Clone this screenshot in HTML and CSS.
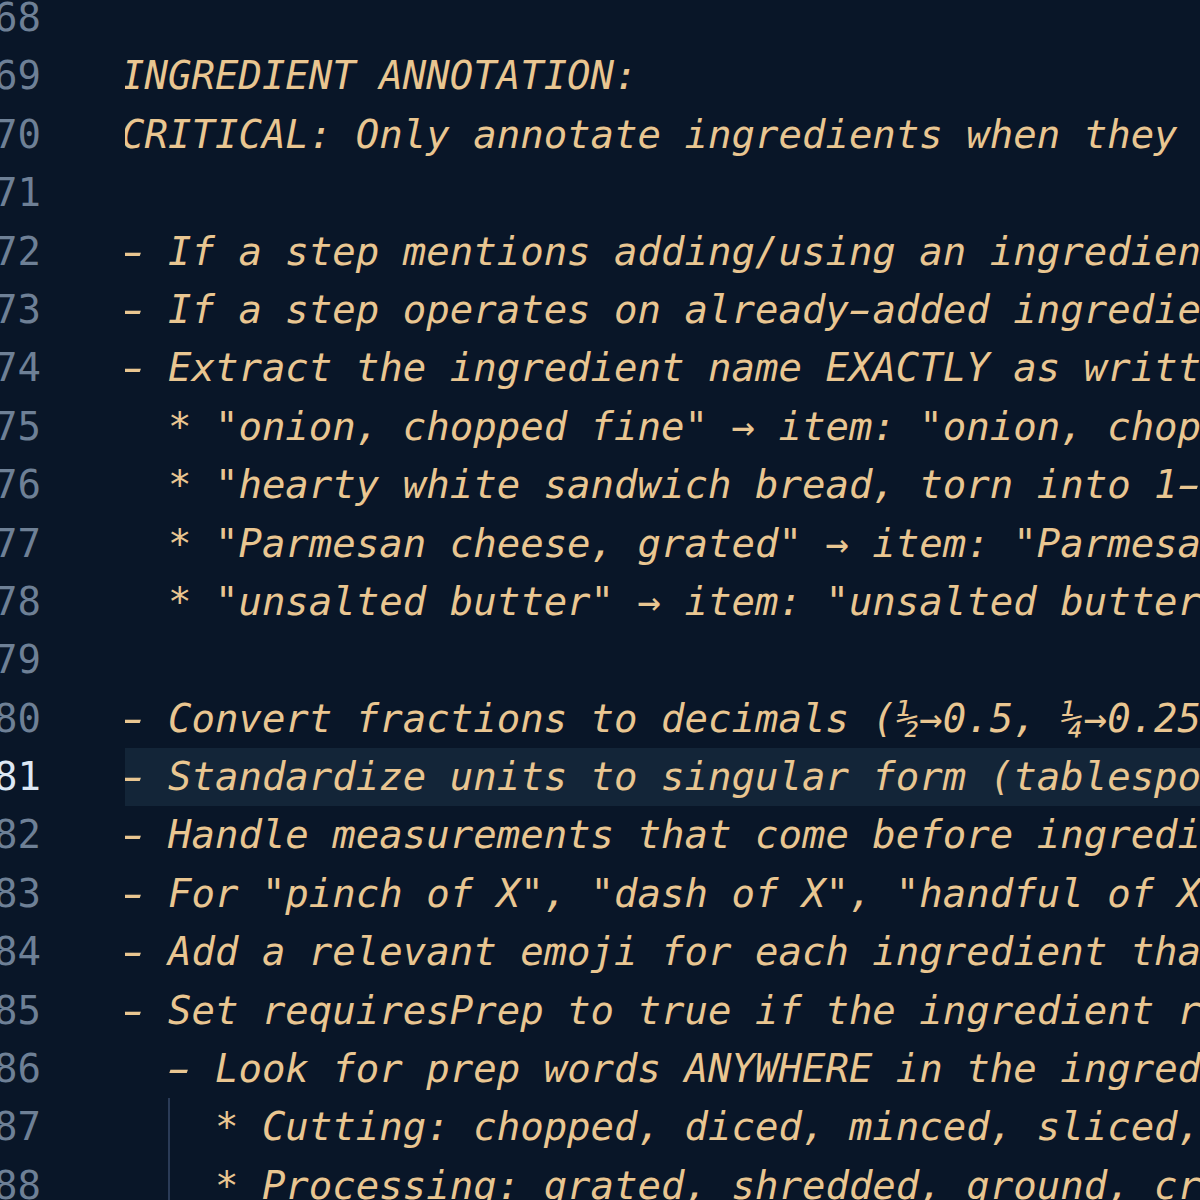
FILE: index.html
```html
<!DOCTYPE html>
<html>
<head>
<meta charset="utf-8">
<link rel="stylesheet" href="styles.css">
</head>
<body>
<div class="editor">
  <div class="row"><span class="ln">68</span><div class="code"><span class="txt"></span></div></div>
  <div class="row"><span class="ln">69</span><div class="code"><span class="txt">INGREDIENT ANNOTATION:</span></div></div>
  <div class="row"><span class="ln">70</span><div class="code"><span class="txt">CRITICAL: Only annotate ingredients when they are explicitly added</span></div></div>
  <div class="row"><span class="ln">71</span><div class="code"><span class="txt"></span></div></div>
  <div class="row"><span class="ln">72</span><div class="code"><span class="txt"><span class="h">-</span> If a step mentions adding/using an ingredient, annotate it</span></div></div>
  <div class="row"><span class="ln">73</span><div class="code"><span class="txt"><span class="h">-</span> If a step operates on already<span class="h">-</span>added ingredients, skip it</span></div></div>
  <div class="row"><span class="ln">74</span><div class="code"><span class="txt"><span class="h">-</span> Extract the ingredient name EXACTLY as written</span></div></div>
  <div class="row"><span class="ln">75</span><div class="code"><span class="txt">  * "onion, chopped fine" → item: "onion, chopped fine"</span></div></div>
  <div class="row"><span class="ln">76</span><div class="code"><span class="txt">  * "hearty white sandwich bread, torn into 1<span class="h">-</span>inch pieces"</span></div></div>
  <div class="row"><span class="ln">77</span><div class="code"><span class="txt">  * "Parmesan cheese, grated" → item: "Parmesan cheese, grated"</span></div></div>
  <div class="row"><span class="ln">78</span><div class="code"><span class="txt">  * "unsalted butter" → item: "unsalted butter"</span></div></div>
  <div class="row"><span class="ln">79</span><div class="code"><span class="txt"></span></div></div>
  <div class="row"><span class="ln">80</span><div class="code"><span class="txt"><span class="h">-</span> Convert fractions to decimals (½→0.5, ¼→0.25, ¾→0.75)</span></div></div>
  <div class="row active"><span class="ln">81</span><div class="code"><span class="txt"><span class="h">-</span> Standardize units to singular form (tablespoon, cup)</span></div></div>
  <div class="row"><span class="ln">82</span><div class="code"><span class="txt"><span class="h">-</span> Handle measurements that come before ingredients</span></div></div>
  <div class="row"><span class="ln">83</span><div class="code"><span class="txt"><span class="h">-</span> For "pinch of X", "dash of X", "handful of X"</span></div></div>
  <div class="row"><span class="ln">84</span><div class="code"><span class="txt"><span class="h">-</span> Add a relevant emoji for each ingredient that fits</span></div></div>
  <div class="row"><span class="ln">85</span><div class="code"><span class="txt"><span class="h">-</span> Set requiresPrep to true if the ingredient requires prep</span></div></div>
  <div class="row"><span class="ln">86</span><div class="code"><span class="txt">  <span class="h">-</span> Look for prep words ANYWHERE in the ingredient text</span></div></div>
  <div class="row guide"><span class="ln">87</span><div class="code"><span class="txt">    * Cutting: chopped, diced, minced, sliced, cubed</span></div></div>
  <div class="row guide"><span class="ln">88</span><div class="code"><span class="txt">    * Processing: grated, shredded, ground, crushed</span></div></div>
</div>
</body>
</html>
```
FILE: styles.css
```css
html, body {
  margin: 0;
  padding: 0;
  background: #091628;
  overflow: hidden;
  width: 1200px;
  height: 1200px;
}

.editor {
  margin-top: -11px;
  margin-left: -30px;
  display: flex;
  flex-direction: column;
  font-family: "DejaVu Sans Mono", "Liberation Mono", monospace;
  font-size: 39px;
  line-height: 58.4px;
}

.row {
  display: flex;
  height: 58.4px;
}

.ln {
  flex: 0 0 71px;
  text-align: right;
  color: #6e8096;
  font-style: normal;
}

.code {
  margin-left: 84px;
  flex: 1;
  overflow: hidden;
  position: relative;
}

.txt {
  display: block;
  margin-left: -4px;
  white-space: pre;
  font-style: oblique;
  color: #e9c691;
}

.h {
  display: inline-block;
  transform: scaleX(1.75);
}

.active .ln {
  color: #dde8f4;
}

.active .code {
  background: #132538;
}

.guide .code::before {
  content: "";
  position: absolute;
  left: 43px;
  top: 0;
  bottom: 0;
  width: 2px;
  background: #2a3b57;
}
```
